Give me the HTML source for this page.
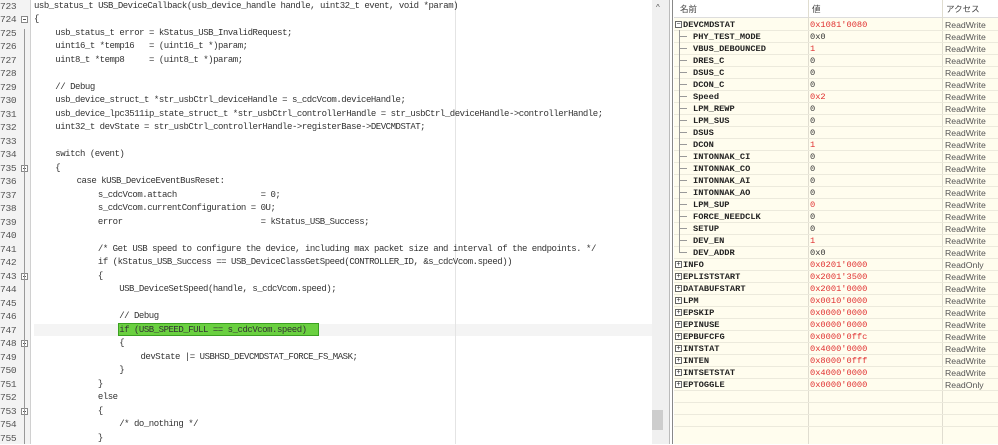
<!DOCTYPE html>
<html><head><meta charset="utf-8"><style>
*{margin:0;padding:0;box-sizing:border-box}
body{width:998px;height:444px;overflow:hidden;background:#fff;position:relative;font-family:"Liberation Mono",monospace}
.gut{position:absolute;left:0;top:0;width:31px;height:444px;background:#f3f3f3;border-right:1px solid #d0d0d0}
.ln{position:absolute;left:0px;font-size:9.6px;color:#555;line-height:13.5px;height:13.5px;letter-spacing:-0.3px}
.cl{position:absolute;font-size:9px;letter-spacing:-0.47px;color:#333;line-height:13.5px;white-space:pre;height:13.5px}
.fold{position:absolute;left:21px;width:7px;height:7px;border:1px solid #888;background:#fff}
.fold:after{content:"";position:absolute;left:1px;top:2px;width:3px;height:1px;background:#555}
.vl{position:absolute;left:24px;width:1px;background:#999}
.sb{position:absolute;left:652px;top:0;width:17px;height:444px;background:#f0f0f0}
.tbl{position:absolute;left:674px;top:0;width:324px;height:444px;background:#fffdee}
.r{position:absolute;left:0;width:324px;height:12px;border-bottom:1px solid #eceadc;font-size:8.7px;line-height:12px}
.n{position:absolute;left:19px;font-weight:bold;color:#222}
.v{position:absolute;left:136px;color:#333}
.red{color:#e03030}
.a{position:absolute;left:271px;font-family:"Liberation Sans",sans-serif;font-size:8.7px;color:#555}
.ic{position:absolute;left:1px;top:2px;width:7px;height:7px;border:1px solid #666;background:#fff;font-size:7px;line-height:5px;text-align:center;color:#222;font-family:"Liberation Sans",sans-serif}
.tr{position:absolute;left:5px;top:-1px;width:7px;height:13px;border-left:1px solid #999}
.tr:after{content:"";position:absolute;left:0;top:6px;width:7px;height:1px;background:#999}
.tl{height:7px}
.tl:after{top:6px}
</style></head><body>
<div class="gut"></div>
<div style="position:absolute;left:34px;top:324px;width:618px;height:12px;background:#f4f4f4"></div>
<div style="position:absolute;left:455px;top:0;width:1px;height:444px;background:#e4e4e4"></div>
<div style="position:absolute;left:118px;top:323px;width:201px;height:13px;background:#6ad040;border:1px solid #3aa020"></div>
<div id="code"></div>
<div class="sb"><div style="position:absolute;left:4px;top:3px;font-size:8px;color:#555;font-family:'Liberation Sans',sans-serif">^</div><div style="position:absolute;left:0;top:410px;width:11px;height:20px;background:#cdcdcd"></div></div>
<div style="position:absolute;left:669px;top:0;width:1px;height:444px;background:#bbb"></div>
<div style="position:absolute;left:672px;top:0;width:1px;height:444px;background:#888"></div>
<div class="tbl" id="tbl">
<div style="position:absolute;left:0;top:0;width:324px;height:18px;background:#fff;border-bottom:1px solid #ddd;font-family:'Liberation Sans','Noto Sans CJK JP',sans-serif;font-size:8.5px;color:#444;line-height:18px">
<span style="position:absolute;left:6px">名前</span><span style="position:absolute;left:138px">値</span><span style="position:absolute;left:272px">アクセス</span></div>
<div style="position:absolute;left:134px;top:0;width:1px;height:444px;background:#e0ddd0"></div>
<div style="position:absolute;left:268px;top:0;width:1px;height:444px;background:#e0ddd0"></div>
</div>
<script>
var L=[[0,"usb_status_t USB_DeviceCallback(usb_device_handle handle, uint32_t event, void *param)"],
[0,"{"],[1,"usb_status_t error = kStatus_USB_InvalidRequest;"],[1,"uint16_t *temp16   = (uint16_t *)param;"],[1,"uint8_t *temp8     = (uint8_t *)param;"],[1,""],[1,"// Debug"],
[1,"usb_device_struct_t *str_usbCtrl_deviceHandle = s_cdcVcom.deviceHandle;"],
[1,"usb_device_lpc3511ip_state_struct_t *str_usbCtrl_controllerHandle = str_usbCtrl_deviceHandle->controllerHandle;"],
[1,"uint32_t devState = str_usbCtrl_controllerHandle->registerBase->DEVCMDSTAT;"],[1,""],[1,"switch (event)"],[1,"{"],
[2,"case kUSB_DeviceEventBusReset:"],[3,"s_cdcVcom.attach                 = 0;"],[3,"s_cdcVcom.currentConfiguration = 0U;"],[3,"error                            = kStatus_USB_Success;"],[3,""],
[3,"/* Get USB speed to configure the device, including max packet size and interval of the endpoints. */"],
[3,"if (kStatus_USB_Success == USB_DeviceClassGetSpeed(CONTROLLER_ID, &s_cdcVcom.speed))"],[3,"{"],
[4,"USB_DeviceSetSpeed(handle, s_cdcVcom.speed);"],[4,""],[4,"// Debug"],[4,"if (USB_SPEED_FULL == s_cdcVcom.speed)"],[4,"{"],
[5,"devState |= USBHSD_DEVCMDSTAT_FORCE_FS_MASK;"],[4,"}"],[3,"}"],[3,"else"],[3,"{"],[4,"/* do_nothing */"],[3,"}"]];
var h="",folds=[1,12,20,25,30];
for(var i=0;i<L.length;i++){var y=-0.5+i*13.5;
h+='<div class="ln" style="top:'+y+'px">'+(723+i)+'</div>';
h+='<div class="cl" style="top:'+y+'px;left:'+(34+L[i][0]*21.3)+'px">'+L[i][1].replace(/&/g,"&amp;").replace(/</g,"&lt;").replace(/>/g,"&gt;")+'</div>';
if(folds.indexOf(i)>=0)h+='<div class="fold" style="top:'+(y+3)+'px"></div>';}
h+='<div class="vl" style="top:29px;height:415px"></div>';
document.getElementById("code").innerHTML=h;
var R=[["DEVCMDSTAT","0x1081'0080",1,"ReadWrite",0],["PHY_TEST_MODE","0x0",0,"ReadWrite",1],["VBUS_DEBOUNCED","1",1,"ReadWrite",1],["DRES_C","0",0,"ReadWrite",1],["DSUS_C","0",0,"ReadWrite",1],["DCON_C","0",0,"ReadWrite",1],["Speed","0x2",1,"ReadWrite",1],["LPM_REWP","0",0,"ReadWrite",1],["LPM_SUS","0",0,"ReadWrite",1],["DSUS","0",0,"ReadWrite",1],["DCON","1",1,"ReadWrite",1],["INTONNAK_CI","0",0,"ReadWrite",1],["INTONNAK_CO","0",0,"ReadWrite",1],["INTONNAK_AI","0",0,"ReadWrite",1],["INTONNAK_AO","0",0,"ReadWrite",1],["LPM_SUP","0",1,"ReadWrite",1],["FORCE_NEEDCLK","0",0,"ReadWrite",1],["SETUP","0",0,"ReadWrite",1],["DEV_EN","1",1,"ReadWrite",1],["DEV_ADDR","0x0",0,"ReadWrite",4],
["INFO","0x0201'0000",1,"ReadOnly",2],["EPLISTSTART","0x2001'3500",1,"ReadWrite",2],["DATABUFSTART","0x2001'0000",1,"ReadWrite",2],["LPM","0x0010'0000",1,"ReadWrite",2],["EPSKIP","0x0000'0000",1,"ReadWrite",2],["EPINUSE","0x0000'0000",1,"ReadWrite",2],["EPBUFCFG","0x0000'0ffc",1,"ReadWrite",2],["INTSTAT","0x4000'0000",1,"ReadWrite",2],["INTEN","0x8000'0fff",1,"ReadWrite",2],["INTSETSTAT","0x4000'0000",1,"ReadWrite",2],["EPTOGGLE","0x0000'0000",1,"ReadOnly",2],["","",0,"",3],["","",0,"",3],["","",0,"",3]];
var t="";
for(var j=0;j<R.length;j++){var r=R[j],y=19+j*12,k=r[4];
t+='<div class="r" style="top:'+y+'px">';
if(k==0)t+='<div class="ic">−</div>';
if(k==2)t+='<div class="ic">+</div>';
if(k==1)t+='<div class="tr"></div>';
if(k==4)t+='<div class="tr tl"></div>';
var nl=(k==1||k==4)?19:9;
t+='<span class="n" style="left:'+nl+'px">'+r[0]+'</span><span class="v'+(r[2]?' red':'')+'">'+r[1]+'</span><span class="a">'+r[3]+'</span></div>';}
document.getElementById("tbl").insertAdjacentHTML("beforeend",t);
</script>
</body></html>
